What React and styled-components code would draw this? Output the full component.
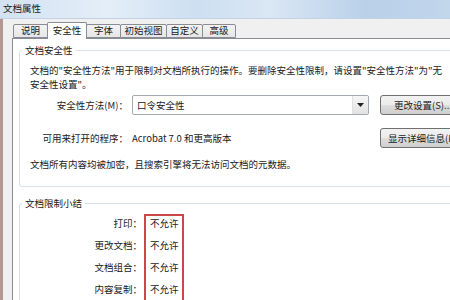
import styled, { createGlobalStyle } from "styled-components";

const GlobalStyle = createGlobalStyle`
  html, body {
    margin: 0;
    padding: 0;
    width: 450px;
    height: 300px;
    overflow: hidden;
    background: #f0f0f0;
  }
  body {
    font-family: "Noto Sans CJK SC", "Noto Sans", sans-serif;
    font-size: 9.5px;
    color: #1a1a1a;
  }
`;

const tabs = [
  { id: 1, text: "说明", width: 35 },
  { id: 2, text: "安全性", width: 40, active: true },
  { id: 3, text: "字体", width: 35 },
  { id: 4, text: "初始视图", width: 47 },
  { id: 5, text: "自定义", width: 37 },
  { id: 6, text: "高级", width: 34 },
];

const limits = [
  { id: 1, label: "打印：", value: "不允许" },
  { id: 2, label: "更改文档：", value: "不允许" },
  { id: 3, label: "文档组合：", value: "不允许" },
  { id: 4, label: "内容复制：", value: "不允许" },
];

function App() {
  return (
    <>
      <GlobalStyle />
      <Window>
        <TitleBar>文档属性</TitleBar>
        <Body>
          <TabStrip>
            {tabs.map((t) => (
              <Tab key={t.id} width={t.width} active={t.active}>
                {t.text}
              </Tab>
            ))}
          </TabStrip>
          <Panel>
            <Group>
              <Legend>文档安全性</Legend>
              <Para>
                文档的"安全性方法"用于限制对文档所执行的操作。要删除安全性限制，请设置"安全性方法"为"无
                <br />
                安全性设置"。
              </Para>
              <FormRow>
                <FieldLabel>安全性方法(M)：</FieldLabel>
                <Select>
                  <span>口令安全性</span>
                  <SelectArrow>
                    <svg width="7" height="4" viewBox="0 0 7 4">
                      <path d="M0 0h7L3.5 4z" fill="#222" />
                    </svg>
                  </SelectArrow>
                </Select>
                <Button>更改设置(S)...</Button>
              </FormRow>
              <FormRow gap={13}>
                <FieldLabel>可用来打开的程序：</FieldLabel>
                <span>Acrobat 7.0 和更高版本</span>
                <Button>显示详细信息(D)</Button>
              </FormRow>
              <Para gap={9}>
                文档所有内容均被加密，且搜索引擎将无法访问文档的元数据。
              </Para>
            </Group>
            <Group second>
              <Legend>文档限制小结</Legend>
              <Summary>
                <LabelCol>
                  {limits.map((l) => (
                    <div key={l.id}>{l.label}</div>
                  ))}
                </LabelCol>
                <ValueBox>
                  {limits.map((l) => (
                    <div key={l.id}>{l.value}</div>
                  ))}
                </ValueBox>
              </Summary>
            </Group>
          </Panel>
        </Body>
      </Window>
    </>
  );
}

const Window = styled.div`
  width: 490px;
  height: 300px;
  display: flex;
  flex-direction: column;
`;

const TitleBar = styled.div`
  height: 18px;
  flex: none;
  display: flex;
  align-items: center;
  padding-left: 3px;
  line-height: 1;
  background: linear-gradient(
    90deg,
    #d3e2f2 0%,
    #e4eef8 22%,
    #cddff1 40%,
    #dae7f4 55%,
    #b9d0e9 75%,
    #c6d9ed 100%
  );
  border-bottom: 1px solid #c2d3e6;
`;

const Body = styled.div`
  flex: 1;
  display: flex;
  flex-direction: column;
  background: #f0f0f0;
  border-left: 3px solid #b39791;
  padding: 3px 0 0 9px;
`;

const TabStrip = styled.div`
  display: flex;
  align-items: flex-end;
  height: 16px;
  padding-left: 1px;
  position: relative;
  z-index: 1;
`;

const Tab = styled.div`
  width: ${({ width }) => width}px;
  box-sizing: border-box;
  height: ${({ active }) => (active ? 17 : 14)}px;
  margin-bottom: ${({ active }) => (active ? -1 : 0)}px;
  margin-left: -1px;
  display: flex;
  align-items: center;
  justify-content: center;
  border: 1px solid #898c95;
  border-bottom: ${({ active }) => (active ? "none" : "1px solid #898c95")};
  border-radius: 2px 2px 0 0;
  background: ${({ active }) =>
    active ? "#fff" : "linear-gradient(#f3f3f3, #e6e6e6)"};
  line-height: 1;
  &:first-child {
    margin-left: 0;
  }
`;

const Panel = styled.div`
  flex: 1;
  background: #fff;
  border: 1px solid #898c95;
  padding: 4px 0 0 6px;
`;

const Group = styled.fieldset`
  margin: ${({ second }) => (second ? 9 : 0)}px 10px 0 0;
  border: 1px solid #d5dfe5;
  border-radius: 3px;
  padding: ${({ second }) => (second ? "4px 0 40px 10px" : "6px 0 15px 10px")};
  min-width: 0;
`;

const Legend = styled.legend`
  padding: 0 3px;
  margin-left: -8px;
  line-height: 14px;
`;

const Para = styled.p`
  margin: ${({ gap }) => gap || 0}px 0 0;
  line-height: 14px;
  white-space: nowrap;
`;

const FormRow = styled.div`
  display: grid;
  grid-template-columns: 98px 237px auto;
  column-gap: 4px;
  align-items: center;
  height: 20px;
  margin-top: ${({ gap }) => gap || 4}px;
  white-space: nowrap;
`;

const FieldLabel = styled.span`
  text-align: right;
`;

const Select = styled.div`
  height: 20px;
  box-sizing: border-box;
  border: 1px solid #a4a9b0;
  border-radius: 2px;
  display: flex;
  align-items: center;
  justify-content: space-between;
  padding-left: 4px;
  background: #fff;
`;

const SelectArrow = styled.div`
  width: 15px;
  height: 18px;
  display: flex;
  align-items: center;
  justify-content: center;
  background: linear-gradient(#f6f6f6, #e2e2e2);
  border-left: 1px solid #e0e0e0;
`;

const Button = styled.div`
  margin-left: 7px;
  width: 86px;
  height: 20px;
  box-sizing: border-box;
  display: flex;
  align-items: center;
  justify-content: center;
  border: 1px solid #707070;
  border-radius: 3px;
  background: linear-gradient(#f2f2f2 0%, #ebebeb 50%, #dddddd 51%, #cfcfcf 100%);
`;

const Summary = styled.div`
  display: flex;
  align-items: flex-start;
`;

const LabelCol = styled.div`
  width: 112px;
  padding-top: 2px;
  display: flex;
  flex-direction: column;
  gap: 8px;
  text-align: right;
  line-height: 14px;
`;

const ValueBox = styled.div`
  margin-left: 2px;
  border: 2px solid #cc4747;
  padding: 0 3px 20px 4px;
  display: flex;
  flex-direction: column;
  gap: 8px;
  line-height: 14px;
`;

export default App;
